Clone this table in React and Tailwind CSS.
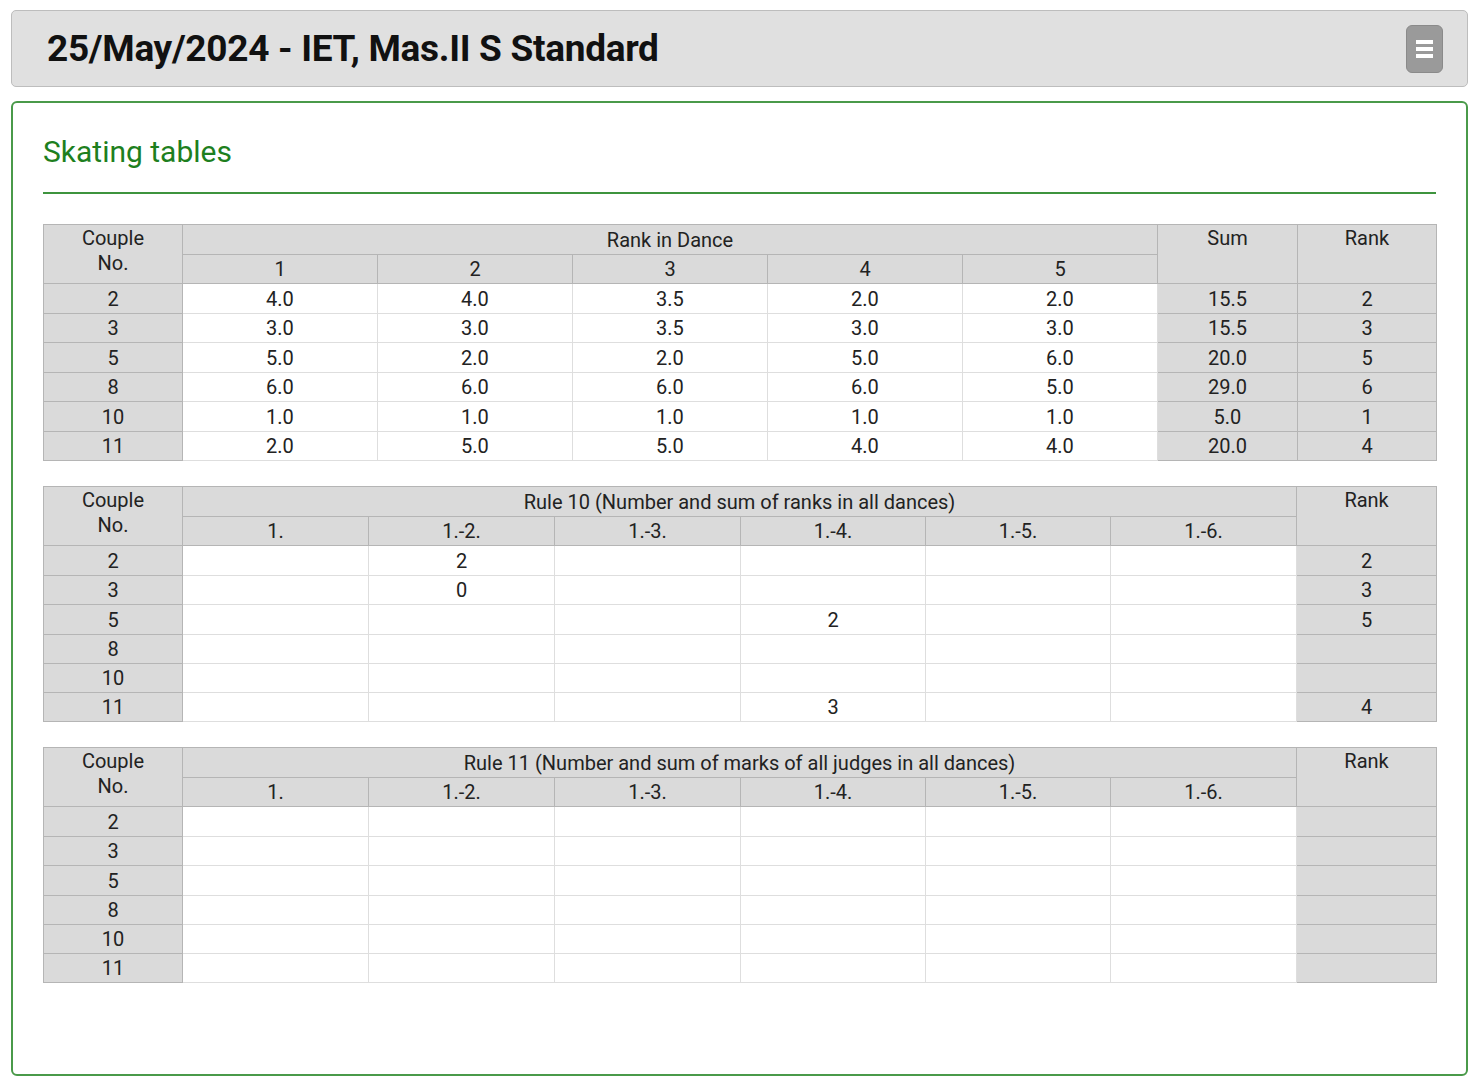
import React from 'react';

const font = { fontFamily: 'Roboto, "Liberation Sans", sans-serif' };

const couples = ['2', '3', '5', '8', '10', '11'];

const dance = [
  ['4.0', '4.0', '3.5', '2.0', '2.0', '15.5', '2'],
  ['3.0', '3.0', '3.5', '3.0', '3.0', '15.5', '3'],
  ['5.0', '2.0', '2.0', '5.0', '6.0', '20.0', '5'],
  ['6.0', '6.0', '6.0', '6.0', '5.0', '29.0', '6'],
  ['1.0', '1.0', '1.0', '1.0', '1.0', '5.0', '1'],
  ['2.0', '5.0', '5.0', '4.0', '4.0', '20.0', '4'],
];

const rule10 = [
  ['', '2', '', '', '', '', '2'],
  ['', '0', '', '', '', '', '3'],
  ['', '', '', '2', '', '', '5'],
  ['', '', '', '', '', '', ''],
  ['', '', '', '', '', '', ''],
  ['', '', '', '3', '', '', '4'],
];

const rule11 = couples.map(() => ['', '', '', '', '', '', '']);

const places = ['1.', '1.-2.', '1.-3.', '1.-4.', '1.-5.', '1.-6.'];

const gray = 'bg-[#dadada] border border-[#b5b5b5]';
const white = 'bg-white border border-[#dedede]';

const SkatingTable = ({ title, cols, rows, extra, widths, tight }) => {
  const inner = cols.length;
  return (
    <table className="w-full border-collapse table-fixed text-[20px] text-[#222] text-center border border-[#b5b5b5]">
      <colgroup>
        {widths.map((w, i) => (
          <col key={i} style={{ width: w }} />
        ))}
      </colgroup>
      <thead>
        <tr className="h-[30px]">
          <th rowSpan={2} className={`${gray} font-normal align-top leading-[25px] pt-[1px]`}>
            Couple<br />No.
          </th>
          <th colSpan={inner} className={`${gray} font-normal leading-[24px]`}>{title}</th>
          {extra.map((e) => (
            <th key={e} rowSpan={2} className={`${gray} font-normal align-top leading-[25px] pt-[1px]`}>{e}</th>
          ))}
        </tr>
        <tr className="h-[29px]">
          {cols.map((c) => (
            <th key={c} className={`${gray} font-normal leading-[24px]`}>{c}</th>
          ))}
        </tr>
      </thead>
      <tbody>
        {rows.map((r, i) => (
          <tr
            key={i}
            className={i % 2 === 0 && !(tight && i === 4) ? 'h-[30px]' : 'h-[29px]'}
          >
            <td className={`${gray} leading-[24px]`}>{couples[i]}</td>
            {r.slice(0, inner).map((v, j) => (
              <td key={j} className={`${white} leading-[24px]`}>{v}</td>
            ))}
            {r.slice(inner, inner + extra.length).map((v, j) => (
              <td key={'e' + j} className={`${gray} leading-[24px]`}>{v}</td>
            ))}
          </tr>
        ))}
      </tbody>
    </table>
  );
};

export default function App() {
  return (
    <div className="min-h-[1083px] bg-white pl-[11px] pr-[14px] pt-[10px] pb-[8px]" style={font}>
      <div className="h-[77px] flex items-center justify-between bg-[#e0e0e0] border border-[#bdbdbd] rounded-[5px] pl-[35px] pr-[24px]">
        <h1 className="text-[37px] font-bold text-[#111] tracking-[-0.3px]">25/May/2024 - IET, Mas.II S Standard</h1>
        <button className="w-[37px] h-[48px] rounded-[6px] bg-[#9a9a9a] border border-[#8a8a8a] flex flex-col items-center justify-center gap-[3px]">
          <span className="block w-[17px] h-[4px] bg-white" />
          <span className="block w-[17px] h-[4px] bg-white" />
          <span className="block w-[17px] h-[4px] bg-white" />
        </button>
      </div>

      <div className="mt-[14px] h-[975px] border-2 border-[#4a9a4a] rounded-[6px] px-[30px] pt-[29px]">
        <h2 className="text-[30px] text-[#1e7f1e] leading-[40px]">Skating tables</h2>
        <div className="mt-[20px] h-[2px] bg-[#3e943e]" />

        <div className="mt-[30px] flex flex-col gap-[25px]">
          <SkatingTable
            title="Rank in Dance"
            cols={['1', '2', '3', '4', '5']}
            rows={dance}
            extra={['Sum', 'Rank']}
            widths={['139px', '195px', '195px', '195px', '195px', '195px', '140px', '139px']}
          />
          <SkatingTable
            title="Rule 10 (Number and sum of ranks in all dances)"
            cols={places}
            rows={rule10}
            extra={['Rank']}
            tight
            widths={['139px', '186px', '186px', '186px', '185px', '185px', '186px', '140px']}
          />
          <SkatingTable
            title="Rule 11 (Number and sum of marks of all judges in all dances)"
            cols={places}
            rows={rule11}
            extra={['Rank']}
            tight
            widths={['139px', '186px', '186px', '186px', '185px', '185px', '186px', '140px']}
          />
        </div>
      </div>
    </div>
  );
}
